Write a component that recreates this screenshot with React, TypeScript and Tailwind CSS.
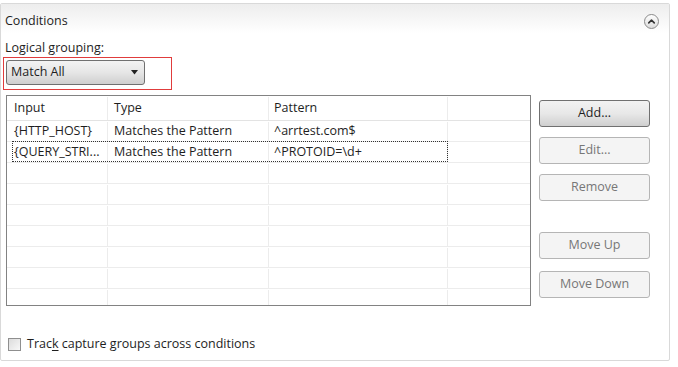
import { ChevronUp } from "lucide-react";

const ROWS = [
  { input: "{HTTP_HOST}", type: "Matches the Pattern", pattern: "^arrtest.com$" },
  { input: "{QUERY_STRI...", type: "Matches the Pattern", pattern: "^PROTOID=\\d+" },
];

const BUTTONS = [
  { label: "Add...", enabled: true, gap: 0 },
  { label: "Edit...", enabled: false, gap: 10 },
  { label: "Remove", enabled: false, gap: 10 },
  { label: "Move Up", enabled: false, gap: 31 },
  { label: "Move Down", enabled: false, gap: 12 },
];

function Cells({ a, b, c, header }: { a?: string; b?: string; c?: string; header?: boolean }) {
  return (
    <div
      className={`flex shrink-0 items-center border-b pt-[1px] ${header ? "h-[25px] border-[#e3e3e3]" : "h-[21px] border-[#ececec]"}`}
    >
      <div className="flex h-full w-[101px] items-center border-r border-[#ececec] pl-[7px]">{a}</div>
      <div className="flex h-full w-[161px] items-center border-r border-[#ececec] pl-[6px]">{b}</div>
      <div className="flex h-full w-[179px] items-center border-r border-[#ececec] pl-[5px]">{c}</div>
      <div className="h-full flex-1" />
    </div>
  );
}

export default function App() {
  return (
    <div
      className="h-[367px] w-[678px] overflow-hidden bg-white pt-[3px] text-[12.5px] text-[#1e1e1e]"
      style={{ fontFamily: '"Open Sans", "Noto Sans", sans-serif' }}
    >
      <div className="flex h-[358px] w-[670px] flex-col rounded-[2px] border border-[#d9d9d9]">
        {/* Header */}
        <div className="flex h-[29px] shrink-0 items-center justify-between bg-gradient-to-b from-[#ededed] to-white pl-[4px] pr-[10px] pt-[5px]">
          <span>Conditions</span>
          <span className="flex h-[15px] w-[15px] items-center justify-center rounded-full border border-[#8a8a8a] bg-gradient-to-b from-white to-[#dcdcdc]">
            <ChevronUp size={11} strokeWidth={3.5} className="text-[#333]" />
          </span>
        </div>

        <div className="flex flex-1 flex-col pl-[2px]">
          <div className="mt-[7px] h-[16px] pl-[2px] leading-[16px]">
            Logical <span className="underline underline-offset-2">g</span>rouping:
          </div>
          {/* Red highlighted dropdown */}
          <div className="mt-[1px] h-[33px] w-[169px] border border-[#e03c3c] pl-[2px] pt-[2px]">
            <div className="flex h-[25px] w-[139px] items-center justify-between rounded-[3px] border border-[#707070] bg-gradient-to-b from-[#f3f3f3] via-[#e6e6e6] to-[#cfcfcf] pl-[4px] pr-[5px]">
              <span>Match All</span>
              <svg width="8" height="5" viewBox="0 0 8 5">
                <path d="M0 0 H7 L3.5 4.5 Z" fill="#222" />
              </svg>
            </div>
          </div>

          <div className="mt-[5px] flex">
            {/* Table */}
            <div className="ml-[3px] flex h-[211px] w-[525px] flex-col overflow-hidden border border-[#828282] bg-white">
              <Cells header a="Input" b="Type" c="Pattern" />
              {ROWS.map((r, i) => (
                <div key={i} className={i === 1 ? "relative" : ""}>
                  <Cells a={r.input} b={r.type} c={r.pattern} />
                  {i === 1 && (
                    <div className="pointer-events-none absolute left-[5px] top-[-1px] h-[21px] w-[436px] border border-dotted border-[#333]" />
                  )}
                </div>
              ))}
              {Array.from({ length: 7 }).map((_, i) => (
                <Cells key={i} />
              ))}
            </div>

            {/* Buttons */}
            <div className="ml-[8px] mt-[5px] flex flex-col">
              {BUTTONS.map((b) => (
                <div
                  key={b.label}
                  style={{ marginTop: b.gap }}
                  className={`flex h-[27px] w-[111px] items-center justify-center rounded-[3px] border ${
                    b.enabled
                      ? "border-[#707070] bg-gradient-to-b from-[#f2f2f2] via-[#e8e8e8] to-[#cfcfcf] text-[#1e1e1e]"
                      : "border-[#b5b5b5] bg-[#f4f4f4] text-[#777777]"
                  }`}
                >
                  {b.label}
                </div>
              ))}
            </div>
          </div>

          {/* Checkbox */}
          <div className="mt-[29px] flex items-center pl-[5px]">
            <span className="h-[13px] w-[13px] border border-[#8f8f8f] bg-gradient-to-br from-[#dcdcdc] to-[#f8f8f8]" />
            <span className="ml-[6px]">
              Trac<span className="underline underline-offset-2">k</span> capture groups across conditions
            </span>
          </div>
        </div>
      </div>
    </div>
  );
}
